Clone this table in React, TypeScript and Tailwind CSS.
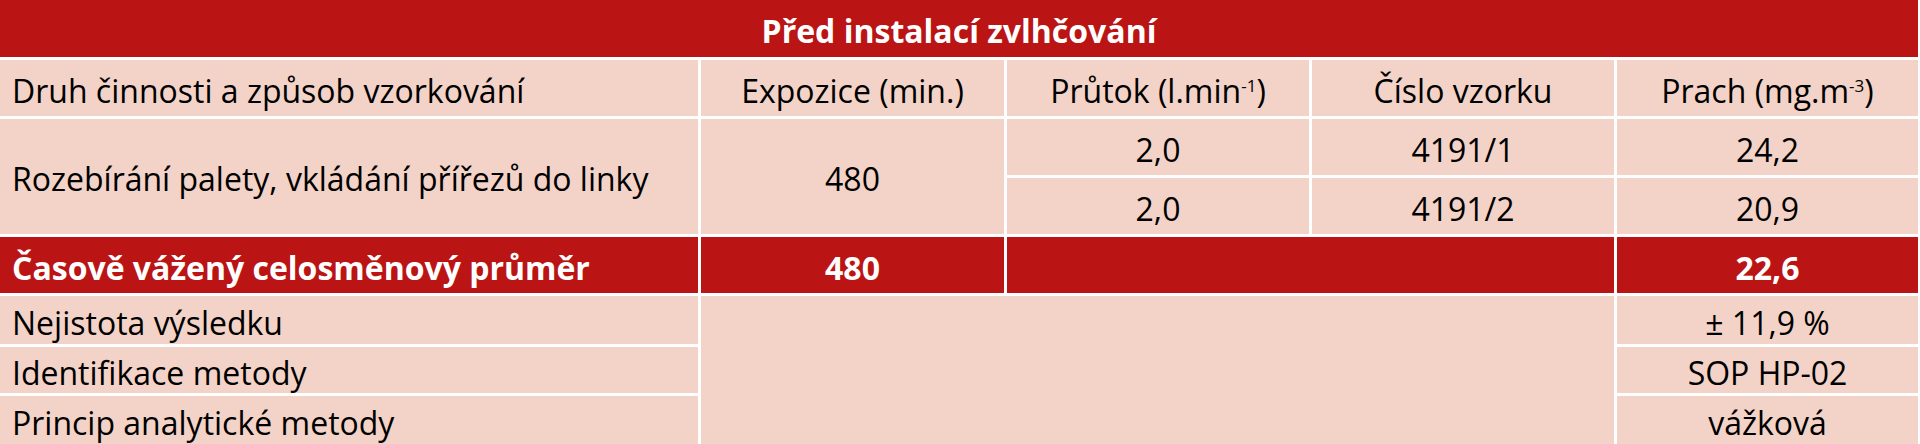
import React from "react";

const red = "bg-[#bb1414] text-white font-bold";
const pink = "bg-[#f3d3c7] text-black";
const cell = "flex items-center pt-[5px]";

export default function App() {
  return (
    <div
      className="w-[1920px] h-[444px] bg-white pr-[2px]"
      style={{ fontFamily: '"Open Sans", "Noto Sans", sans-serif' }}
    >
      <div className="grid grid-cols-[698px_303px_302px_302px_1fr] grid-rows-[57px_56px_56px_56px_56px_48px_46px_48px] gap-[3px] text-[32px] leading-none">
        <div className={`${red} ${cell} col-span-5 justify-center`}>
          Před instalací zvlhčování
        </div>

        <div className={`${pink} ${cell} pl-[12px]`}>
          Druh činnosti a způsob vzorkování
        </div>
        <div className={`${pink} ${cell} justify-center`}>Expozice (min.)</div>
        <div className={`${pink} ${cell} justify-center`}>
          <span>
            Průtok (l.min
            <sup className="text-[17px] relative -top-[11px]">-1</sup>)
          </span>
        </div>
        <div className={`${pink} ${cell} justify-center`}>Číslo vzorku</div>
        <div className={`${pink} ${cell} justify-center`}>
          <span>
            Prach (mg.m
            <sup className="text-[17px] relative -top-[11px]">-3</sup>)
          </span>
        </div>

        <div className={`${pink} ${cell} row-span-2 pl-[12px]`}>
          Rozebírání palety, vkládání přířezů do linky
        </div>
        <div className={`${pink} ${cell} row-span-2 justify-center`}>480</div>
        <div className={`${pink} ${cell} justify-center`}>2,0</div>
        <div className={`${pink} ${cell} justify-center`}>4191/1</div>
        <div className={`${pink} ${cell} justify-center`}>24,2</div>
        <div className={`${pink} ${cell} justify-center`}>2,0</div>
        <div className={`${pink} ${cell} justify-center`}>4191/2</div>
        <div className={`${pink} ${cell} justify-center`}>20,9</div>

        <div className={`${red} ${cell} pl-[12px]`}>
          Časově vážený celosměnový průměr
        </div>
        <div className={`${red} ${cell} justify-center`}>480</div>
        <div className={`${red} col-span-2`} />
        <div className={`${red} ${cell} justify-center`}>22,6</div>

        <div className={`${pink} ${cell} pl-[12px]`}>Nejistota výsledku</div>
        <div className={`${pink} col-span-3 row-span-3`} />
        <div className={`${pink} ${cell} justify-center`}>± 11,9 %</div>
        <div className={`${pink} ${cell} pl-[12px]`}>Identifikace metody</div>
        <div className={`${pink} ${cell} justify-center`}>SOP HP-02</div>
        <div className={`${pink} ${cell} pl-[12px]`}>
          Princip analytické metody
        </div>
        <div className={`${pink} ${cell} justify-center`}>vážková</div>
      </div>
    </div>
  );
}
